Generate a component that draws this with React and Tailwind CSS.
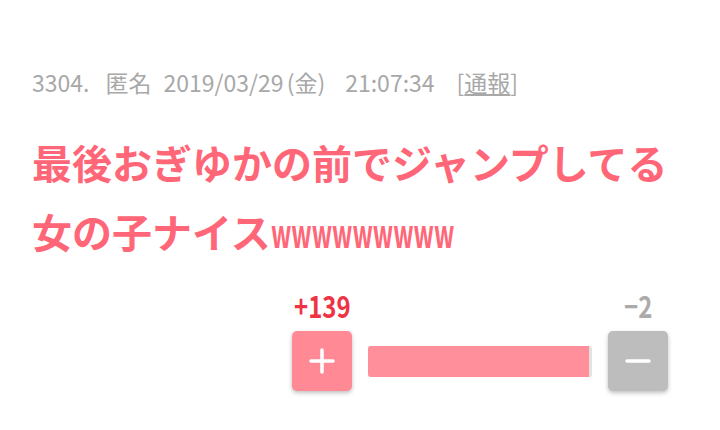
export default function App() {
  const up = 139;
  const down = 2;
  const ratio = (up / (up + down)) * 100;

  return (
    <div
      className="w-[720px] h-[430px] bg-white pl-[32px] pt-[68px]"
      style={{ fontFamily: '"Noto Sans CJK JP", "Noto Sans", sans-serif' }}
    >
      <div className="flex text-[23px] leading-[28px] text-[#a8a8a8] whitespace-nowrap">
        <span>3304.</span>
        <span className="ml-[16px]">匿名</span>
        <span className="ml-[12px]">2019/03/29</span>
        <span className="ml-[3px]">(金)</span>
        <span className="ml-[20px]">21:07:34</span>
        <span className="ml-[22px]">
          [<span className="underline underline-offset-2">通報</span>]
        </span>
      </div>

      <p className="w-[650px] mt-[32px] text-[40px] leading-[69px] font-bold text-[#ff6677] whitespace-nowrap">
        最後おぎゆかの前でジャンプしてる
        <br />
        女の子ナイス
        <span className="inline-block origin-left scale-x-[0.59]">wwwwwwwww</span>
      </p>

      <div className="w-[636px] flex justify-end mt-[24px]">
        <div className="w-[376px]">
          <div className="flex justify-between h-[30px] text-[30px] leading-[30px] font-bold">
            <span className="inline-block origin-left scale-x-[0.8] text-[#ee3344] ml-[2px]">+{up}</span>
            <span className="inline-block origin-right scale-x-[0.8] text-[#ababab] mr-[16px]">−{down}</span>
          </div>
          <div className="flex items-center gap-[16px] mt-[11px]">
            <button className="w-[60px] h-[60px] rounded-[5px] bg-[#ff8a96] shadow-[0_2px_4px_rgba(0,0,0,0.25)] flex items-center justify-center">
              <svg width="26" height="26" viewBox="0 0 26 26">
                <path d="M13 2v22M2 13h22" stroke="white" strokeWidth="3.5" strokeLinecap="round" />
              </svg>
            </button>
            <div className="flex-1 h-[31px] rounded-[3px] bg-[#e2e2e2] overflow-hidden">
              <div className="h-full bg-[#ff8f9b]" style={{ width: ratio + '%' }} />
            </div>
            <button className="w-[60px] h-[60px] rounded-[5px] bg-[#bdbdbd] shadow-[0_2px_4px_rgba(0,0,0,0.25)] flex items-center justify-center">
              <svg width="26" height="26" viewBox="0 0 26 26">
                <path d="M2 13h22" stroke="white" strokeWidth="3.5" strokeLinecap="round" />
              </svg>
            </button>
          </div>
        </div>
      </div>
    </div>
  );
}
